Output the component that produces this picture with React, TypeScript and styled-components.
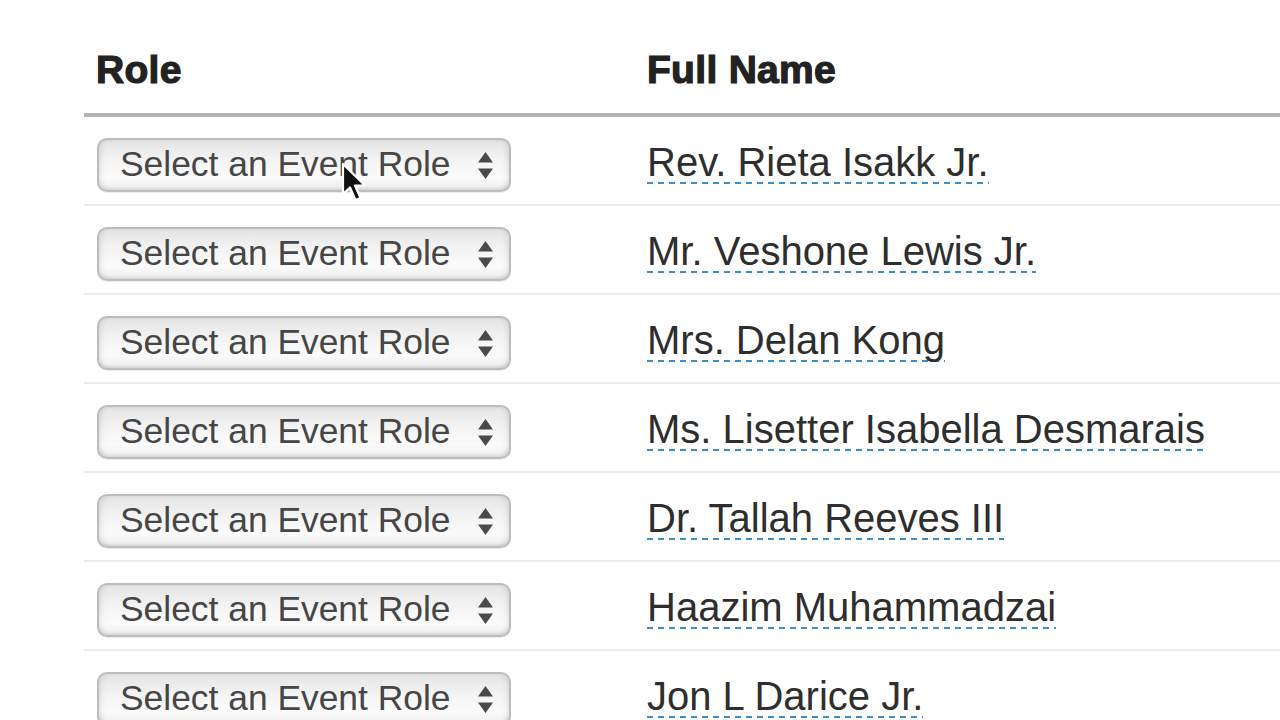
import { memo } from "react";
import styled, { createGlobalStyle } from "styled-components";

const GlobalStyle = createGlobalStyle`
  html, body {
    margin: 0;
    padding: 0;
    background: #ffffff;
    overflow: hidden;
  }
  body {
    font-family: "Liberation Sans", Arial, sans-serif;
    color: #333333;
  }
`;

const Page = styled.div`
  width: 1280px;
  height: 720px;
  overflow: hidden;
  padding-left: 84px;
  box-sizing: border-box;
  position: relative;
`;

const Table = styled.div`
  width: 1300px;
  display: flex;
  flex-direction: column;
`;

const HeaderRow = styled.div`
  display: grid;
  grid-template-columns: 551px 1fr;
  height: 113px;
  border-bottom: 4px solid #b3b3b3;
`;

const HeaderCell = styled.div`
  padding: 50px 12px 0 12px;
  font-size: 39px;
  line-height: 39px;
  font-weight: 700;
  color: #222222;
  -webkit-text-stroke: 1.2px #222222;
  letter-spacing: 0.3px;
`;

const Row = styled.div`
  display: grid;
  grid-template-columns: 551px 1fr;
  height: 87px;
  border-bottom: 2px solid #ebebeb;
`;

const RoleCell = styled.div`
  padding: 21px 0 0 13px;
`;

const NameCell = styled.div`
  padding: 25px 12px 0 12px;
`;

const SelectBox = styled.div`
  width: 414px;
  height: 54px;
  box-sizing: border-box;
  border: 2px solid #bdbdbd;
  border-radius: 10px;
  background: linear-gradient(to bottom, #e4e4e4 0%, #f3f3f3 40%, #fbfbfb 75%, #ededed 100%);
  box-shadow: inset 4px 0 6px -3px rgba(0, 0, 0, 0.12), inset -4px 0 6px -3px rgba(0, 0, 0, 0.12),
    inset 0 -3px 4px -2px rgba(0, 0, 0, 0.1), 0 1px 1px rgba(0, 0, 0, 0.08);
  display: flex;
  align-items: center;
  justify-content: space-between;
  padding: 0 15px 0 21px;
`;

const SelectText = styled.span`
  font-size: 35.4px;
  line-height: 40px;
  color: #464646;
  padding-bottom: 2px;
`;

const Arrows = styled.svg`
  width: 17px;
  height: 31px;
  flex-shrink: 0;
`;

const Name = styled.span`
  display: inline-block;
  font-size: 40px;
  line-height: 40px;
  color: #2e2e2e;
  padding-bottom: 2px;
  background-image: linear-gradient(to right, #3b8ec9 55%, transparent 55%);
  background-size: 11px 2px;
  background-repeat: repeat-x;
  background-position: left bottom;
`;

const Cursor = styled.svg`
  position: absolute;
  left: 339px;
  top: 161px;
  width: 30px;
  height: 46px;
  pointer-events: none;
`;

const names = [
  "Rev. Rieta Isakk Jr.",
  "Mr. Veshone Lewis Jr.",
  "Mrs. Delan Kong",
  "Ms. Lisetter Isabella Desmarais",
  "Dr. Tallah Reeves III",
  "Haazim Muhammadzai",
  "Jon L Darice Jr.",
  "Ms. Amira Holt",
];

const RoleSelect = memo(() => (
  <SelectBox>
    <SelectText>Select an Event Role</SelectText>
    <Arrows viewBox="0 0 17 31">
      <path d="M8.5 2 L16 12.5 L1 12.5 Z" fill="#4a4a4a" />
      <path d="M1 18.5 L16 18.5 L8.5 29 Z" fill="#4a4a4a" />
    </Arrows>
  </SelectBox>
));

const App = () => {
  return (
    <>
      <GlobalStyle />
      <Page>
        <Table>
          <HeaderRow>
            <HeaderCell>Role</HeaderCell>
            <HeaderCell>Full Name</HeaderCell>
          </HeaderRow>
          {names.map((n) => (
            <Row key={n}>
              <RoleCell>
                <RoleSelect />
              </RoleCell>
              <NameCell>
                <Name>{n}</Name>
              </NameCell>
            </Row>
          ))}
        </Table>
        <Cursor viewBox="0 0 30 46">
          <path
            d="M4 3 L4 33 L11 26.5 L16.5 39 L21.5 37 L16 24.5 L26 24.5 Z"
            fill="#111"
            stroke="#fff"
            strokeWidth="2.2"
            strokeLinejoin="round"
          />
        </Cursor>
      </Page>
    </>
  );
};

export default App;
